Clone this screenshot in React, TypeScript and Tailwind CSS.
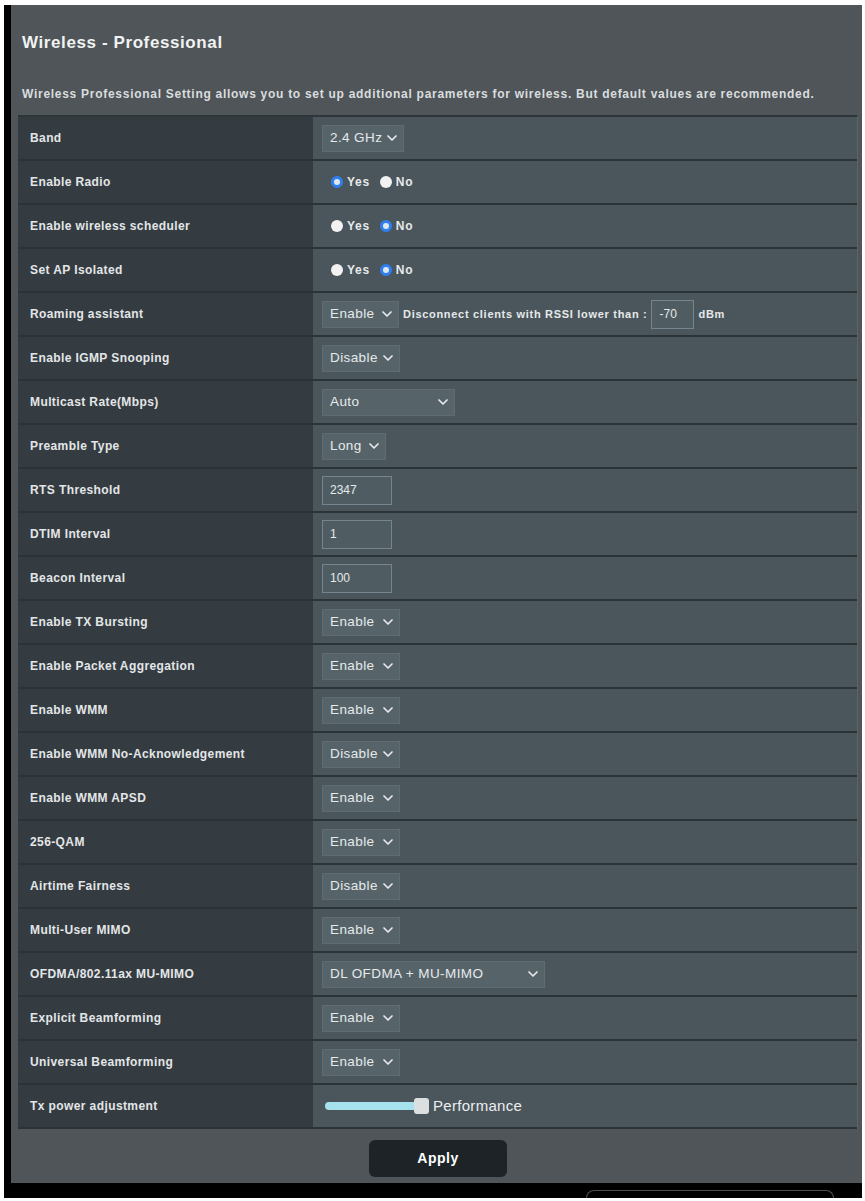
import React from 'react';

type Row =
  | { label: string; kind: 'select'; value: string; width: string }
  | { label: string; kind: 'radio'; yes: boolean }
  | { label: string; kind: 'input'; value: string }
  | { label: string; kind: 'roaming' }
  | { label: string; kind: 'slider' };

const rows: Row[] = [
  { label: 'Band', kind: 'select', value: '2.4 GHz', width: 'w-[82px]' },
  { label: 'Enable Radio', kind: 'radio', yes: true },
  { label: 'Enable wireless scheduler', kind: 'radio', yes: false },
  { label: 'Set AP Isolated', kind: 'radio', yes: false },
  { label: 'Roaming assistant', kind: 'roaming' },
  { label: 'Enable IGMP Snooping', kind: 'select', value: 'Disable', width: 'w-[78px]' },
  { label: 'Multicast Rate(Mbps)', kind: 'select', value: 'Auto', width: 'w-[133px]' },
  { label: 'Preamble Type', kind: 'select', value: 'Long', width: 'w-[64px]' },
  { label: 'RTS Threshold', kind: 'input', value: '2347' },
  { label: 'DTIM Interval', kind: 'input', value: '1' },
  { label: 'Beacon Interval', kind: 'input', value: '100' },
  { label: 'Enable TX Bursting', kind: 'select', value: 'Enable', width: 'w-[78px]' },
  { label: 'Enable Packet Aggregation', kind: 'select', value: 'Enable', width: 'w-[78px]' },
  { label: 'Enable WMM', kind: 'select', value: 'Enable', width: 'w-[78px]' },
  { label: 'Enable WMM No-Acknowledgement', kind: 'select', value: 'Disable', width: 'w-[78px]' },
  { label: 'Enable WMM APSD', kind: 'select', value: 'Enable', width: 'w-[78px]' },
  { label: '256-QAM', kind: 'select', value: 'Enable', width: 'w-[78px]' },
  { label: 'Airtime Fairness', kind: 'select', value: 'Disable', width: 'w-[78px]' },
  { label: 'Multi-User MIMO', kind: 'select', value: 'Enable', width: 'w-[78px]' },
  { label: 'OFDMA/802.11ax MU-MIMO', kind: 'select', value: 'DL OFDMA + MU-MIMO', width: 'w-[223px]' },
  { label: 'Explicit Beamforming', kind: 'select', value: 'Enable', width: 'w-[78px]' },
  { label: 'Universal Beamforming', kind: 'select', value: 'Enable', width: 'w-[78px]' },
  { label: 'Tx power adjustment', kind: 'slider' },
];

function Chevron() {
  return (
    <svg width="10" height="6" viewBox="0 0 10 6" className="shrink-0">
      <path d="M1 1l4 4 4-4" fill="none" stroke="#e6e9ea" strokeWidth="1.7" strokeLinecap="round" strokeLinejoin="round" />
    </svg>
  );
}

function Select({ value, width }: { value: string; width: string }) {
  return (
    <div className={`${width} h-[27px] shrink-0 flex items-center justify-between gap-[3px] pl-[7px] pr-[6px] bg-[#56646a] border border-[#5e6c72] text-[13.5px] tracking-[0.4px] font-normal text-[#e6e9ea]`}>
      <span className="whitespace-nowrap">{value}</span>
      <Chevron />
    </div>
  );
}

function Input({ value, width = 'w-[70px]' }: { value: string; width?: string }) {
  return (
    <div className={`${width} h-[29px] shrink-0 flex items-center px-[7px] bg-[#4f5d63] border border-[#76858b] text-[12px] tracking-normal font-normal text-[#e6e9ea]`}>
      {value}
    </div>
  );
}

function Radio({ on, label }: { on: boolean; label: string }) {
  return (
    <span className="flex items-center gap-[4px]">
      {on ? (
        <span className="w-[12px] h-[12px] rounded-full bg-[#dfe6ee] border-[3px] border-[#2f7ff0]" />
      ) : (
        <span className="w-[12px] h-[12px] rounded-full bg-[#f2f2f2]" />
      )}
      <span className="text-[12px] tracking-[0.7px] font-bold text-[#e6e9ea]">{label}</span>
    </span>
  );
}

function Value({ row }: { row: Row }) {
  switch (row.kind) {
    case 'select':
      return <Select value={row.value} width={row.width} />;
    case 'input':
      return <Input value={row.value} />;
    case 'radio':
      return (
        <div className="flex items-center gap-[10px] pl-[9px]">
          <Radio on={row.yes} label="Yes" />
          <Radio on={!row.yes} label="No" />
        </div>
      );
    case 'roaming':
      return (
        <div className="flex items-center gap-[4px] text-[11px] tracking-[0.7px] font-bold text-[#e6e9ea]">
          <Select value="Enable" width="w-[77px]" />
          <span className="whitespace-nowrap">Disconnect clients with RSSI lower than :</span>
          <Input value="-70" width="w-[43px]" />
          <span>dBm</span>
        </div>
      );
    case 'slider':
      return (
        <div className="flex items-center pl-[3px]">
          <div className="relative w-[104px] h-[16px] flex items-center">
            <div className="w-[98px] h-[8px] rounded-full bg-[#a6e2ee]" />
            <div className="absolute right-[0px] top-0 w-[15px] h-[16px] rounded-[3px] bg-[#dcdfe0]" />
          </div>
          <span className="ml-[4px] text-[15px] tracking-[0.3px] text-[#eceeef]">Performance</span>
        </div>
      );
  }
}

export default function App() {
  return (
    <div className="w-[865px] h-[1201px] bg-white pt-[5px] pl-[4px] pr-[3px] font-['Liberation_Sans',Arial,sans-serif]">
      <div className="relative bg-black pl-[7px] pb-[15px]">
        <div className="h-[1178px] bg-[#4f5558] pl-[7px] pr-[4px] flex flex-col">
          <h1 className="mt-[28px] ml-[4px] text-[17px] leading-[20px] tracking-[0.6px] font-bold text-[#f1f2f2]">
            Wireless - Professional
          </h1>
          <p className="mt-[34px] ml-[4px] text-[12px] leading-[14px] tracking-[0.72px] font-semibold text-[#dadddf] whitespace-nowrap">
            Wireless Professional Setting allows you to set up additional parameters for wireless. But default values are recommended.
          </p>

          <div className="mt-[14px] border-t-2 border-[#2e363a] border-r border-r-[#5b666b]">
            {rows.map((row) => (
              <div key={row.label} className="flex h-[44px] border-b-2 border-[#2b3337]">
                <div className="w-[295px] shrink-0 bg-[#353c41] flex items-center pl-[12px] text-[12px] tracking-[0.4px] font-bold text-[#e3e6e8]">
                  {row.label}
                </div>
                <div className="flex-1 bg-[#4a565b] flex items-center pl-[9px]">
                  <Value row={row} />
                </div>
              </div>
            ))}
          </div>

          <div className="flex justify-center mt-[11px]">
            <button className="w-[138px] h-[37px] rounded-[6px] bg-[#1d2327] text-[14px] tracking-[0.5px] font-bold text-white">
              Apply
            </button>
          </div>
        </div>
        {/* tab outline peeking from the bar below */}
        <div className="absolute left-[582px] bottom-0 w-[248px] h-[8px] rounded-t-[8px] bg-black border border-b-0 border-[#4a4f54]" />
      </div>
    </div>
  );
}
